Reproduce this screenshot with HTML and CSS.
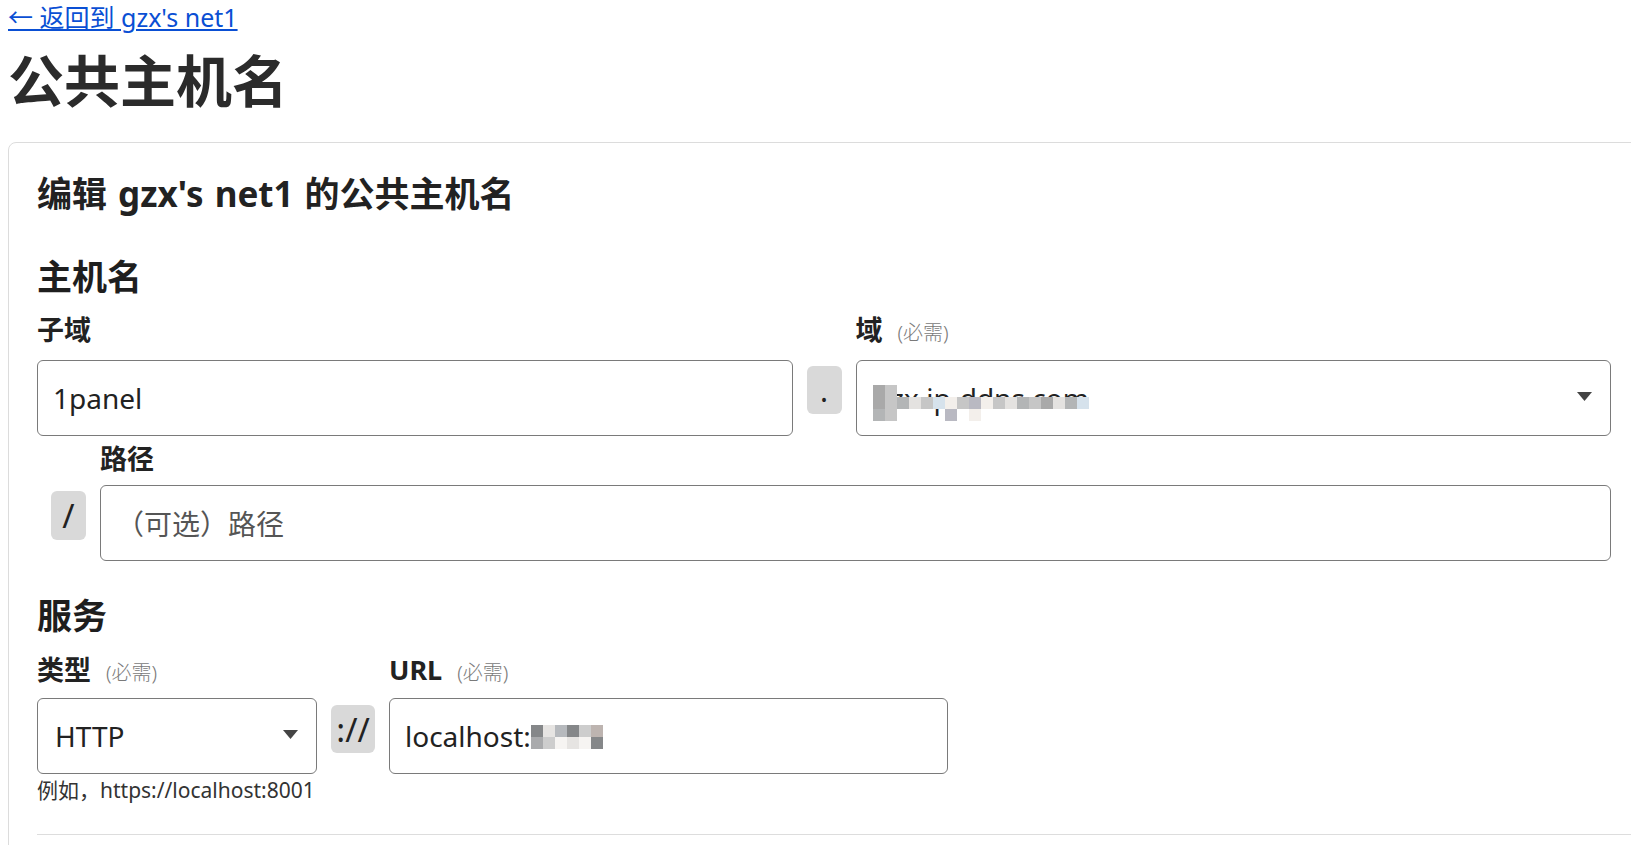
FILE: index.html
```html
<!DOCTYPE html>
<html lang="zh-CN">
<head>
<meta charset="utf-8">
<title>公共主机名</title>
<link rel="stylesheet" href="styles.css">
</head>
<body>
<div class="back-row"><a class="back" href="#">← 返回到 gzx's net1</a></div>
<h1 class="title">公共主机名</h1>

<div class="card">
  <h2 class="card-title">编辑 gzx's net1 的公共主机名</h2>

  <h3 class="section section-host">主机名</h3>
  <div class="host-grid">
    <div class="label">子域</div>
    <div></div>
    <div class="label">域<span class="req">(必需)</span></div>

    <div class="control">1panel</div>
    <div class="sep">.</div>
    <div class="control select">
      <span class="masked">gzx.ip-ddns.com
        <span class="mosaic mosaic-domain">
          <i class="c1"></i><i class="c2"></i><i class="ct"></i><i class="ct"></i><i class="ct"></i><i class="ct"></i><i class="ct"></i><i class="ct"></i><i class="ct"></i><i class="ct"></i><i class="ct"></i><i class="ct"></i><i class="ct"></i><i class="ct"></i><i class="ct"></i><i class="ct"></i><i class="ct"></i><i class="ct"></i>
          <i class="c1"></i><i class="c2"></i><i class="c3"></i><i class="c4"></i><i class="c2"></i><i class="c5"></i><i class="c6"></i><i class="c2"></i><i class="c7"></i><i class="c6"></i><i class="c2"></i><i class="c4"></i><i class="c3"></i><i class="c2"></i><i class="c1"></i><i class="c4"></i><i class="c3"></i><i class="c5"></i>
          <i class="c3"></i><i class="c2"></i><i class="ct"></i><i class="ct"></i><i class="ct"></i><i class="ct"></i><i class="c7"></i><i class="ct"></i><i class="c6"></i><i class="ct"></i><i class="ct"></i><i class="ct"></i><i class="ct"></i><i class="ct"></i><i class="ct"></i><i class="ct"></i><i class="ct"></i><i class="ct"></i>
        </span>
      </span>
      <svg class="caret" width="15" height="9" viewBox="0 0 15 9"><polygon points="0,0 15,0 7.5,9" fill="#444"/></svg>
    </div>
  </div>

  <div class="path-grid">
    <div class="label label-path">路径</div>
    <div class="sep sep-slash">/</div>
    <div class="control placeholder">（可选）路径</div>
  </div>

  <h3 class="section section-svc">服务</h3>
  <div class="svc-grid">
    <div class="label">类型<span class="req">(必需)</span></div>
    <div></div>
    <div class="label">URL<span class="req">(必需)</span></div>

    <div class="control select">
      <span>HTTP</span>
      <svg class="caret" width="15" height="9" viewBox="0 0 15 9"><polygon points="0,0 15,0 7.5,9" fill="#444"/></svg>
    </div>
    <div class="sep sep-proto">://</div>
    <div class="control control-url">localhost:<span class="mosaic mosaic-url"><i class="d1"></i><i class="d2"></i><i class="d3"></i><i class="d1"></i><i class="d4"></i><i class="d5"></i><i class="d6"></i><i class="d4"></i><i class="d7"></i><i class="d2"></i><i class="d7"></i><i class="d1"></i></span></div>

    <div class="help">例如，https://localhost:8001</div>
  </div>

  <div class="divider"></div>
</div>
</body>
</html>
```

FILE: styles.css
```css
* {
  box-sizing: border-box;
}

html {
  overflow-x: hidden;
}

body {
  margin: 0 0 0 8px;
  font-family: "Noto Sans", "Noto Sans CJK SC", sans-serif;
  color: #222;
  background: #fff;
}

.back-row {
  padding-top: 1px;
  font-size: 25px;
  line-height: 32px;
}

.back {
  color: #0a4fd4;
  text-decoration: underline;
}

.title {
  margin: 15px 0 0;
  font-size: 56px;
  line-height: 64px;
  font-weight: 700;
  color: #2b2b2b;
}

.card {
  margin-top: 30px;
  width: 1632px;
  border: 1px solid #dcdcdc;
  border-radius: 8px;
  padding: 29px 28px 40px;
}

.card-title {
  margin: 0;
  font-size: 35px;
  line-height: 44px;
  font-weight: 700;
  color: #222;
  word-spacing: 2px;
}

.section {
  margin: 0;
  font-size: 35px;
  line-height: 44px;
  font-weight: 700;
  color: #1e1e1e;
}

.section-host {
  margin-top: 39px;
}

.section-svc {
  margin-top: 33px;
}

.label {
  font-size: 27px;
  line-height: 34px;
  font-weight: 700;
  color: #222;
  white-space: nowrap;
}

.req {
  margin-left: 15px;
  font-size: 20px;
  font-weight: 300;
  color: #7a7a7a;
}

.host-grid {
  margin-top: 14px;
  display: grid;
  grid-template-columns: 1fr 35px 1fr;
  column-gap: 14px;
  row-gap: 10px;
}

.path-grid {
  margin-top: 6px;
  padding-left: 14px;
  display: grid;
  grid-template-columns: 35px 1fr;
  column-gap: 14px;
  row-gap: 9px;
}

.label-path {
  grid-column: 2;
}

.svc-grid {
  margin-top: 15px;
  display: grid;
  grid-template-columns: 280px 44px 559px;
  column-gap: 14px;
  row-gap: 8px;
}

.control {
  height: 76px;
  border: 1px solid #7a7a7a;
  border-radius: 6px;
  padding: 0 15px;
  display: flex;
  align-items: center;
  font-size: 28px;
  color: #222;
  background: #fff;
  white-space: nowrap;
}

.select {
  padding: 0 18px 0 17px;
  justify-content: space-between;
}

.placeholder {
  color: #555;
}

.caret {
  display: block;
  flex: none;
  margin-top: -3px;
}

.sep {
  align-self: start;
  margin-top: 6px;
  height: 48px;
  border-radius: 6px;
  background: #d9d9d9;
  display: flex;
  align-items: center;
  justify-content: center;
  font-size: 30px;
  color: #222;
}

.sep-slash {
  height: 49px;
  font-size: 33px;
}

.sep-proto {
  margin-top: 7px;
  font-size: 33px;
}

.help {
  grid-column: 1 / span 3;
  margin-top: -5px;
  font-size: 21px;
  line-height: 26px;
  color: #333;
  white-space: nowrap;
}

.divider {
  margin-top: 31px;
  margin-right: -28px;
  border-top: 1px solid #dddddd;
}

/* pixelated redaction overlays */
.masked {
  position: relative;
  display: inline-block;
}

.mosaic {
  display: grid;
}

.mosaic i {
  display: block;
}

.mosaic-domain {
  position: absolute;
  left: -1px;
  top: 6px;
  grid-template-columns: repeat(18, 12px);
  grid-auto-rows: 12px;
}

.mosaic-url {
  grid-template-columns: repeat(6, 12px);
  grid-auto-rows: 12px;
  margin-top: 2px;
}

.c1 { background: #a9a9a9; }
.c2 { background: #c6c6c6; }
.c3 { background: #b3b5b6; }
.c4 { background: #e4e2e0; }
.c5 { background: #d6e2ec; }
.c6 { background: #f3efeb; }
.c7 { background: #b9b9c2; }
.ct { background: transparent; }

.d1 { background: #858789; }
.d2 { background: #e6e4e2; }
.d3 { background: #b6b9bd; }
.d4 { background: #cdcdcd; }
.d5 { background: #bdb4b0; }
.d6 { background: #a9aaac; }
.d7 { background: #f6f4f2; }
```
